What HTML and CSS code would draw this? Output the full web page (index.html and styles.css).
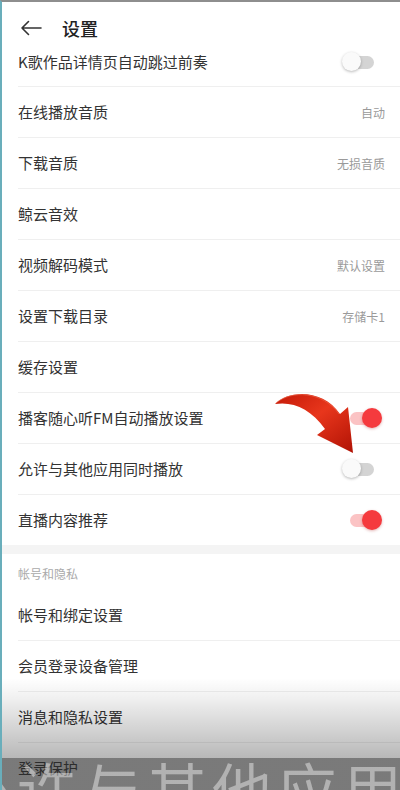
FILE: index.html
```html
<!DOCTYPE html>
<html lang="zh">
<head>
<meta charset="utf-8">
<link rel="stylesheet" href="styles.css">
</head>
<body>
<div class="screen">
  <header class="topbar">
    <svg class="back" width="22" height="16" viewBox="0 0 22 16"><path d="M21 8H2M8.5 1.5L2 8l6.5 6.5" fill="none" stroke="#333" stroke-width="1.6" stroke-linecap="round" stroke-linejoin="round"/></svg>
    <h1 class="title">设置</h1>
  </header>
  <ul class="list">
    <li class="row first"><span class="label">K歌作品详情页自动跳过前奏</span><span class="switch off"><i></i></span></li>
    <li class="row"><span class="label">在线播放音质</span><span class="value">自动</span></li>
    <li class="row"><span class="label">下载音质</span><span class="value">无损音质</span></li>
    <li class="row"><span class="label">鲸云音效</span></li>
    <li class="row"><span class="label">视频解码模式</span><span class="value">默认设置</span></li>
    <li class="row"><span class="label">设置下载目录</span><span class="value">存储卡1</span></li>
    <li class="row"><span class="label">缓存设置</span></li>
    <li class="row"><span class="label">播客随心听FM自动播放设置</span><span class="switch on"><i></i></span></li>
    <li class="row"><span class="label">允许与其他应用同时播放</span><span class="switch off"><i></i></span></li>
    <li class="row last"><span class="label">直播内容推荐</span><span class="switch on"><i></i></span></li>
  </ul>
  <div class="gap"></div>
  <div class="section">帐号和隐私</div>
  <ul class="list">
    <li class="row"><span class="label">帐号和绑定设置</span></li>
    <li class="row"><span class="label">会员登录设备管理</span></li>
    <li class="row"><span class="label">消息和隐私设置</span></li>
    <li class="row"><span class="label">登录保护</span></li>
  </ul>

  <svg class="pointer" width="400" height="790" viewBox="0 0 400 790">
    <defs>
      <linearGradient id="ag" x1="0" y1="0" x2="1" y2="1">
        <stop offset="0" stop-color="#c41a08"/>
        <stop offset="0.45" stop-color="#e8361c"/>
        <stop offset="1" stop-color="#b01204"/>
      </linearGradient>
    </defs>
    <path d="M275,404 C290,389 324,390 340,414 L348,407 L353,453 L317,435 L325,429 C311,409 293,401 275,404 Z" fill="url(#ag)"/>
    <path d="M276,403 C291,390 323,391 339,414" fill="none" stroke="#f06a4e" stroke-width="1" opacity="0.6"/>
  </svg>

  <div class="shade">
    <div class="caption">允许与其他应用同时播放</div>
  </div>
</div>
</body>
</html>
```
FILE: styles.css
```css
* { box-sizing: border-box; }
html, body { margin: 0; padding: 0; }
body {
  width: 400px;
  height: 790px;
  overflow: hidden;
  background: #fff;
  font-family: "Noto Sans CJK SC", "Noto Sans", sans-serif;
  color: #333;
}
.screen {
  position: relative;
  width: 400px;
  height: 790px;
  overflow: hidden;
  border-top: 2px solid #8e8e8e;
  border-left: 2px solid #69aebb;
  background: #fff;
}
.topbar {
  display: flex;
  align-items: center;
  height: 37px;
  padding: 15px 0 0 18px;
}
.back { flex: none; }
.title {
  margin: 0 0 0 20px;
  font-size: 18px;
  font-weight: 500;
  line-height: 22px;
  color: #222;
}
.list {
  list-style: none;
  margin: 0;
  padding: 0 0 0 16px;
}
.row {
  display: flex;
  align-items: center;
  justify-content: space-between;
  height: 51px;
  padding-right: 15px;
  border-bottom: 1px solid #efefef;
}
.row.first { height: 48px; padding-bottom: 1px; }
.row.last { border-bottom: none; height: 50px; }
.label {
  font-size: 15px;
  line-height: 20px;
  color: #333;
}
.value {
  font-size: 12px;
  color: #9a9a9a;
}
.switch {
  position: relative;
  width: 40px;
  height: 22px;
  margin-right: 3px;
}
.switch::before {
  content: "";
  position: absolute;
  top: 5px;
  height: 13px;
  border-radius: 7px;
}
.switch i {
  position: absolute;
  top: 1px;
  width: 20px;
  height: 20px;
  border-radius: 50%;
}
.switch.off::before { background: #d4d4d4; left: 7px; width: 25px; }
.switch.off i {
  left: 0;
  width: 19px;
  height: 19px;
  background: #fafafa;
  box-shadow: 0 1px 3px rgba(0,0,0,0.28);
}
.switch.on::before { background: #fbc3c4; left: 8px; width: 27px; }
.switch.on i {
  right: 0;
  background: #f53a3e;
  box-shadow: 0 1px 3px rgba(160,0,0,0.3);
}
.gap {
  height: 9px;
  background: #f4f4f4;
}
.section {
  height: 36px;
  padding: 12px 0 0 16px;
  font-size: 12px;
  line-height: 16px;
  color: #aaa;
}
.pointer {
  position: absolute;
  left: -2px;
  top: -2px;
  pointer-events: none;
}
.shade {
  position: absolute;
  left: -2px;
  right: 0;
  bottom: 0;
  height: 112px;
  background: linear-gradient(to bottom,
    rgba(0,0,0,0) 0px,
    rgba(0,0,0,0.06) 20px,
    rgba(0,0,0,0.28) 80px,
    rgba(40,40,40,0.62) 80px,
    rgba(40,40,40,0.62) 112px);
  overflow: hidden;
}
.caption {
  position: absolute;
  left: -48px;
  top: 80px;
  white-space: nowrap;
  font-size: 60px;
  line-height: 60px;
  letter-spacing: 5px;
  color: rgba(255,255,255,0.42);
}
```
